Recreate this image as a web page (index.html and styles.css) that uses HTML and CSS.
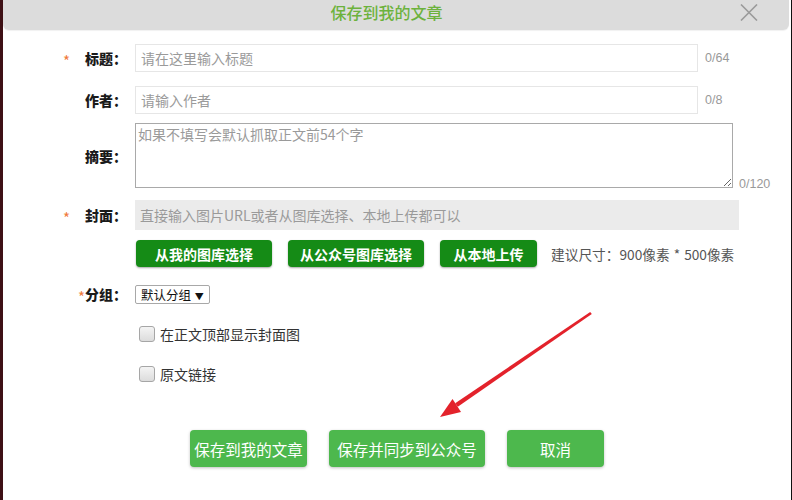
FILE: index.html
```html
<!DOCTYPE html>
<html lang="zh-CN">
<head>
<meta charset="utf-8">
<title>保存到我的文章</title>
<link rel="stylesheet" href="styles.css">
</head>
<body>
<div class="page">
  <div class="header">
    <div class="title">保存到我的文章</div>
    <svg class="close" width="18" height="17" viewBox="0 0 18 17"><path d="M1 0.5 L17 16.5 M17 0.5 L1 16.5" stroke="#9a9a9a" stroke-width="1.6" fill="none"/></svg>
  </div>
  <div class="form">
    <div class="row r-title">
      <div class="label"><span class="star">*</span>标题：</div>
      <input class="text" type="text" placeholder="请在这里输入标题">
      <span class="count">0/64</span>
    </div>
    <div class="row r-author">
      <div class="label">作者：</div>
      <input class="text" type="text" placeholder="请输入作者">
      <span class="count">0/8</span>
    </div>
    <div class="row r-summary">
      <div class="label">摘要：</div>
      <textarea class="area" placeholder="如果不填写会默认抓取正文前54个字"></textarea>
      <span class="count count-bottom">0/120</span>
    </div>
    <div class="row r-cover">
      <div class="label"><span class="star">*</span>封面：</div>
      <input class="text cover" type="text" placeholder="直接输入图片URL或者从图库选择、本地上传都可以">
    </div>
    <div class="row r-btns">
      <span class="btn-dark b1">从我的图库选择</span>
      <span class="btn-dark b2">从公众号图库选择</span>
      <span class="btn-dark b3">从本地上传</span>
      <span class="hint">建议尺寸：900像素 <span class="mul">*</span> 500像素</span>
    </div>
    <div class="row r-group">
      <div class="label"><span class="star tight">*</span>分组：</div>
      <div class="select">默认分组 <span class="tri">▼</span></div>
    </div>
    <div class="check-row c1"><span class="box"></span><span class="check-label">在正文顶部显示封面图</span></div>
    <div class="check-row c2"><span class="box"></span><span class="check-label">原文链接</span></div>
    <div class="footer">
      <span class="btn f1">保存到我的文章</span>
      <span class="btn f2">保存并同步到公众号</span>
      <span class="btn f3">取消</span>
    </div>
  </div>
  <svg class="arrow" width="792" height="500" viewBox="0 0 792 500">
    <polygon points="591.8,313.9 590.2,312.1 455.2,403.2 457.8,406.8" fill="#e3222b"/>
    <polygon points="440,417 452.5,399 456.5,405 461,412" fill="#e3222b"/>
  </svg>
</div>
</body>
</html>
```
FILE: styles.css
```css
* { box-sizing: border-box; }
html, body { margin: 0; padding: 0; }
body {
  width: 792px;
  height: 500px;
  overflow: hidden;
  background: #fff;
  font-family: "Noto Sans CJK SC", "Liberation Sans", sans-serif;
  color: #222;
}
.page {
  position: relative;
  width: 792px;
  height: 500px;
  border-left: 3px solid #3e1015;
  border-right: 1px solid #111;
  background: #fff;
}
.header {
  display: flex;
  align-items: flex-start;
  height: 30px;
  margin-right: 2px;
  background: #dcdcdc;
  border-radius: 0 0 6px 6px;
  box-shadow: 0 1px 1px rgba(0,0,0,0.06);
}
.title {
  flex: 1;
  padding-left: 30px;
  text-align: center;
  font-size: 16px;
  font-weight: 500;
  line-height: 24px;
  color: #6cb23c;
}
.close {
  margin-top: 4px;
  margin-right: 31px;
}
.form {
  padding-top: 14px;
}
.row {
  display: flex;
  align-items: center;
}
.label {
  display: flex;
  align-items: center;
  justify-content: flex-end;
  width: 124px;
  margin-right: 8px;
  font-size: 14px;
  font-weight: 900;
  line-height: 20px;
  color: #1a1a1a;
  white-space: nowrap;
}
.star {
  color: #f07a3c;
  font-weight: normal;
  font-size: 15px;
  line-height: 20px;
  height: 14px;
  margin-right: 15px;
}
.star.tight { margin-right: 0; }
.text {
  height: 28px;
  width: 563px;
  border: 1px solid #e6e6e6;
  padding: 0 5px;
  font-family: "Noto Sans CJK SC", sans-serif;
  font-size: 14px;
  color: #333;
  outline: none;
  background: #fff;
}
.text::placeholder, .area::placeholder { color: #9a9a9a; }
.count {
  margin-left: 7px;
  font-family: "Liberation Sans", sans-serif;
  font-size: 12.5px;
  color: #999;
}
.r-title { margin-bottom: 14px; }
.r-author { margin-bottom: 9px; }
.r-summary { margin-bottom: 12px; align-items: center; }
.area {
  width: 598px;
  height: 65px;
  border: 1px solid #a9a9a9;
  padding: 1px 2px;
  font-family: "Noto Sans CJK SC", sans-serif;
  font-size: 14px;
  line-height: 18px;
  outline: none;
  resize: both;
}
.count-bottom {
  align-self: flex-end;
  margin-left: 6px;
  margin-bottom: -3px;
}
.r-cover { margin-bottom: 10px; }
.text.cover {
  width: 604px;
  height: 30px;
  border: none;
  background: #ebebeb;
}
.r-btns {
  padding-left: 133px;
  margin-bottom: 17px;
}
.btn-dark {
  display: inline-flex;
  align-items: center;
  justify-content: center;
  height: 27px;
  border-radius: 4px;
  background: #158b16;
  color: #fff;
  font-size: 14px;
  font-weight: bold;
  box-shadow: 0 1px 2px rgba(0,0,0,0.35);
}
.b1 { width: 136px; }
.b2 { width: 136px; margin-left: 16px; }
.b3 { width: 97px; margin-left: 16px; }
.hint {
  margin-left: 14px;
  font-size: 13.7px;
  color: #555;
  white-space: nowrap;
}
.mul { margin: 0 1px; }
.r-group { margin-bottom: 22px; }
.r-group .label { width: 124px; }
.select {
  width: 75px;
  height: 19px;
  border: 1px solid #a8a8a8;
  border-radius: 2px;
  padding-left: 5px;
  font-size: 12.5px;
  line-height: 17px;
  color: #111;
  white-space: nowrap;
}
.tri { font-size: 9px; margin-left: 1px; }
.check-row {
  display: flex;
  align-items: center;
  padding-left: 136px;
  height: 16px;
}
.c1 { margin-bottom: 24px; }
.box {
  width: 16px;
  height: 16px;
  border: 1px solid #a6a6a6;
  border-radius: 3px;
  background: linear-gradient(#f4f4f4, #dcdcdc);
}
.check-label {
  margin-left: 5px;
  font-size: 14px;
  line-height: 16px;
  color: #333;
}
.footer {
  display: flex;
  justify-content: center;
  gap: 22px;
  margin-top: 48px;
}
.btn {
  display: inline-flex;
  align-items: center;
  justify-content: center;
  height: 37px;
  border-radius: 4px;
  background: #4db84d;
  color: #fff;
  font-size: 15.5px;
  box-shadow: 0 1px 3px rgba(0,0,0,0.25);
}
.f1 { width: 117px; }
.f2 { width: 156px; }
.f3 { width: 97px; }
.arrow {
  position: absolute;
  left: -3px;
  top: 0;
  pointer-events: none;
}
```
